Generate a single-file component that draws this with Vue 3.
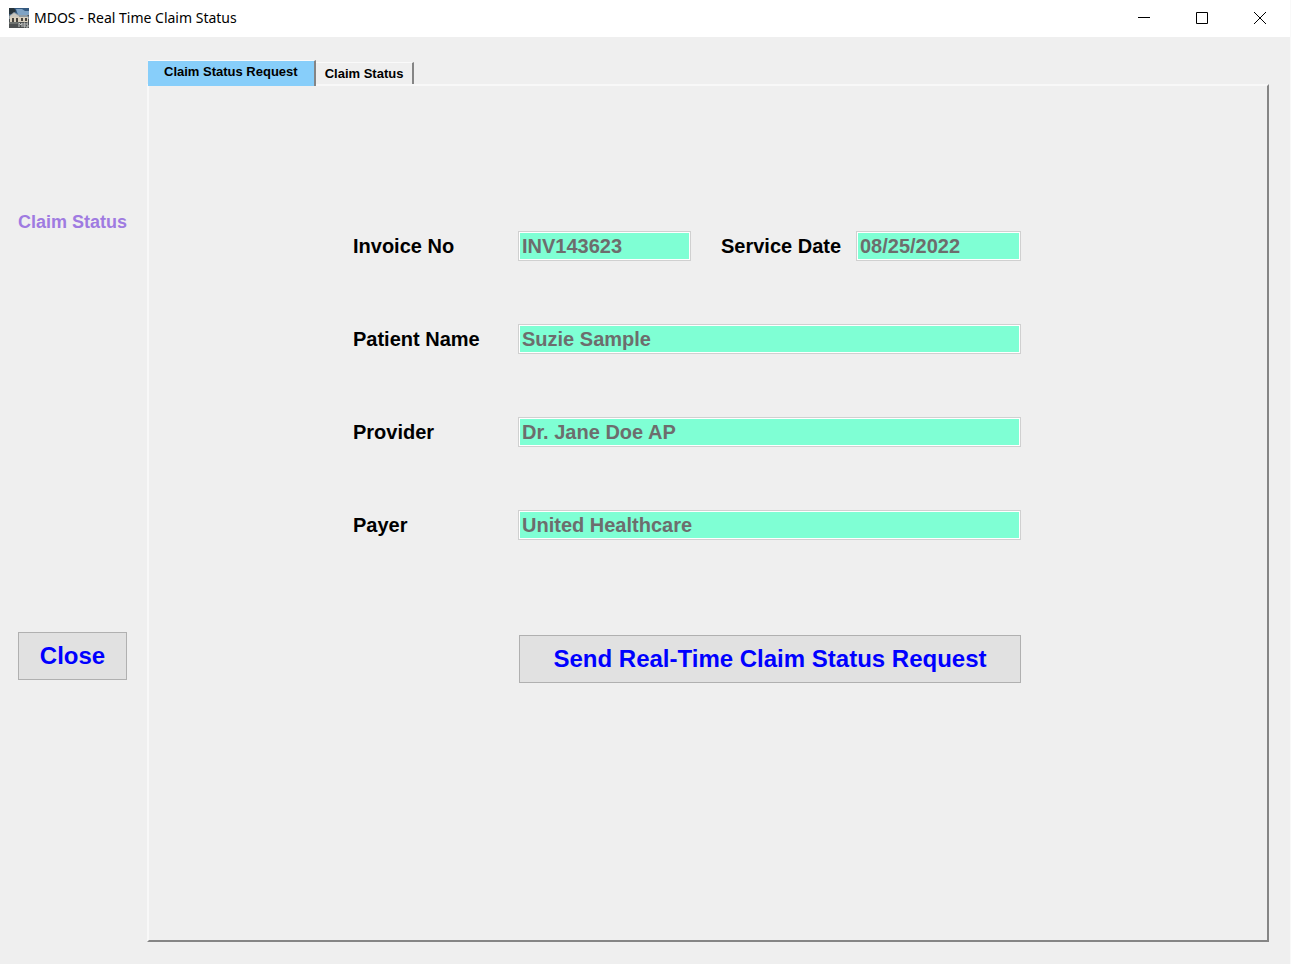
<script setup>
import { ref } from 'vue';

const tabs = ['Claim Status Request', 'Claim Status'];
const activeTab = ref(0);

const claim = ref({
  invoiceNo: 'INV143623',
  serviceDate: '08/25/2022',
  patientName: 'Suzie Sample',
  provider: 'Dr. Jane Doe AP',
  payer: 'United Healthcare',
});
</script>

<template>
  <div class="window">
    <header class="titlebar">
      <svg class="app-icon" viewBox="0 0 20 20" aria-hidden="true">
        <rect width="20" height="20" fill="#4b5052" />
        <rect width="20" height="7" fill="#34597f" />
        <path d="M7 1h6l3 2h4v4H9z" fill="#7fa3c4" />
        <path d="M0 0h5l2 3-3 3H0z" fill="#27343b" />
        <path d="M0 8l5-4 5 3h8l2 2v2H0z" fill="#8f9ba3" />
        <path d="M1 8l4-3 5 3v1H1z" fill="#c9c6bd" />
        <rect x="1" y="9" width="18" height="5" fill="#d8cfbd" />
        <path d="M3 10h2v4H3zM7 10h2v4H7zM12 10h2v3h-2zM16 10h2v3h-2z" fill="#46433e" />
        <path d="M0 14h20v6H0z" fill="#4d5051" />
        <path d="M0 14h11l-3 2H0z" fill="#6f7370" />
        <path
          d="M10 19v-4l2 2 1-2v4M15 15h1v4h-1zM19 15h-1v2h1v2h-2"
          fill="none"
          stroke="#c5c7c6"
        />
      </svg>
      <span class="title">MDOS - Real Time Claim Status</span>
      <div class="window-buttons">
        <button type="button" aria-label="Minimize">
          <svg viewBox="0 0 12 12"><path d="M0 5.5h12" /></svg>
        </button>
        <button type="button" aria-label="Maximize">
          <svg viewBox="0 0 12 12"><path d="M.5.5h11v11H.5z" /></svg>
        </button>
        <button type="button" aria-label="Close window">
          <svg viewBox="0 0 12 12"><path d="M0 0l12 12M12 0L0 12" /></svg>
        </button>
      </div>
    </header>

    <div class="body">
      <aside class="sidebar">
        <div class="section-name">Claim Status</div>
        <button type="button" class="btn btn-close">Close</button>
      </aside>

      <main class="content">
        <div class="tabs" role="tablist">
          <button
            v-for="(tab, i) in tabs"
            :key="tab"
            type="button"
            role="tab"
            class="tab"
            :class="{ active: i === activeTab }"
            :aria-selected="i === activeTab"
            @click="activeTab = i"
          >
            {{ tab }}
          </button>
        </div>

        <section class="panel">
          <form v-if="activeTab === 0" class="claim-form" @submit.prevent>
            <label for="invoice">Invoice No</label>
            <input id="invoice" v-model="claim.invoiceNo" type="text" disabled />
            <label for="date" class="date-label">Service Date</label>
            <input id="date" v-model="claim.serviceDate" type="text" disabled />

            <label for="patient">Patient Name</label>
            <input id="patient" v-model="claim.patientName" class="wide" type="text" disabled />

            <label for="provider">Provider</label>
            <input id="provider" v-model="claim.provider" class="wide" type="text" disabled />

            <label for="payer">Payer</label>
            <input id="payer" v-model="claim.payer" class="wide" type="text" disabled />

            <button type="submit" class="btn btn-send">Send Real-Time Claim Status Request</button>
          </form>
        </section>
      </main>
    </div>
  </div>
</template>

<style>
body {
  margin: 0;
  background: #efefef;
}
</style>

<style scoped>
* {
  box-sizing: border-box;
}

.window {
  display: flex;
  flex-direction: column;
  min-height: 100vh;
  border-right: 1px solid #f9f9f9;
  background: #efefef;
  color: #000;
  font-family: "Liberation Sans", Arial, sans-serif;
  font-weight: bold;
}

button {
  font-family: inherit;
  font-weight: inherit;
}

.titlebar {
  display: flex;
  align-items: center;
  height: 37px;
  padding: 0 1px 2px 9px;
  background: #fff;
}

.app-icon {
  width: 20px;
  height: 20px;
  margin-right: 5px;
}

.title {
  font-family: "Noto Sans", "Open Sans", sans-serif;
  font-size: 14px;
  font-weight: normal;
}

.window-buttons {
  display: flex;
  height: 100%;
  margin-left: auto;
}

.window-buttons button {
  display: grid;
  place-items: center;
  width: 58px;
  padding: 0;
  border: 0;
  background: none;
}

.window-buttons svg {
  width: 12px;
  height: 12px;
  fill: none;
  stroke: #000;
}

.body {
  display: flex;
  flex: 1;
  padding: 24px 21px 22px 0;
}

.sidebar {
  display: flex;
  flex-direction: column;
  align-items: flex-start;
  width: 147px;
  padding: 149px 20px 0 18px;
}

.section-name {
  color: #9f7be1;
  font-size: 18px;
  line-height: 24px;
  white-space: nowrap;
}

.btn {
  height: 48px;
  padding: 0;
  border: 1px solid #b0b0b0;
  background: #e1e1e1;
  color: #00f;
  font-size: 24px;
}

.btn-close {
  width: 109px;
  margin-top: 398px;
}

.content {
  display: flex;
  flex: 1;
  flex-direction: column;
}

.tabs {
  display: flex;
  align-items: flex-end;
  height: 23px;
  padding-left: 1px;
}

.tab {
  height: 22px;
  padding: 0 9px;
  border: 0;
  border-top: 1px solid #fafafa;
  border-right: 2px solid #858585;
  background: #efefef;
  color: #000;
  font-size: 13px;
  line-height: 20px;
}

.tab.active {
  z-index: 1;
  height: 26px;
  margin-bottom: -2px;
  padding: 0 16px 4px;
  background: #87cefa;
}

.panel {
  flex: 1;
  padding: 145px 0 40px 204px;
  border: 2px solid;
  border-color: #f8f8f8 #858585 #858585 #f8f8f8;
}

.claim-form {
  display: grid;
  grid-template-columns: 165px 173px 165px 165px;
  row-gap: 63px;
  align-items: center;
  font-size: 20px;
}

.date-label {
  padding-left: 30px;
}

.claim-form input {
  width: 100%;
  height: 30px;
  padding: 0 3px;
  border: 1px solid #d0d0d0;
  outline: 1px solid #fff;
  outline-offset: -2px;
  border-radius: 0;
  background: #7fffd4;
  color: #6d6d6d;
  font: inherit;
}

.claim-form .wide {
  grid-column: 2 / -1;
}

.btn-send {
  grid-column: 2 / -1;
  margin: 32px 0 0 1px;
}
</style>
